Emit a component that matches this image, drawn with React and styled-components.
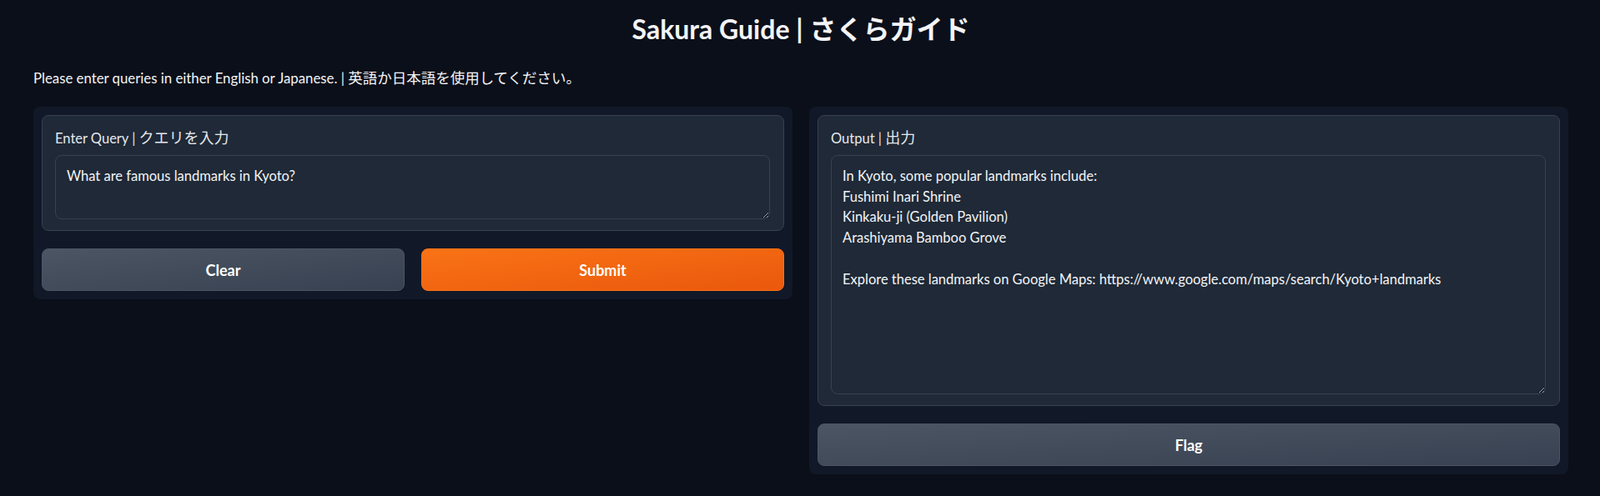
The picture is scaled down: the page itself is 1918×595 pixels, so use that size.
import React from "react"
import styled, { createGlobalStyle } from "styled-components"

const GlobalStyle = createGlobalStyle`
  body {
    margin: 0;
    background: #0b0f19;
    color: #f3f4f6;
    font-family: "Lato", "Noto Sans CJK JP", sans-serif;
  }
`

const Page = styled.div`
  padding: 16px 38px 26px 40px;
`

const Title = styled.h1`
  margin: 0;
  text-align: center;
  font-size: 32px;
  line-height: 38px;
  font-weight: 700;
  color: #f3f4f6;
`

// Japanese runs sit a little larger than the latin text around them
const Jp = styled.span`
  font-family: "Noto Sans CJK JP", sans-serif;
  font-size: ${p => p.$size}px;
`

const Description = styled.p`
  height: 24px;
  margin: 27px 0 23px;
  font-size: 16.8px;
  line-height: 24px;
  color: #f3f4f6;
`

const Columns = styled.div`
  display: grid;
  grid-template-columns: 1fr 1fr;
  gap: 20px;
  align-items: start;
`

const Panel = styled.div`
  display: flex;
  flex-direction: column;
  gap: 21px;
  padding: 10px;
  background: #111827;
  border-radius: 8px;
`

const Block = styled.div`
  padding: 15px 16px 13px 15px;
  background: #1f2937;
  border: 1px solid #374151;
  border-radius: 8px;
`

const Label = styled.label`
  display: block;
  height: 20px;
  margin-bottom: 12px;
  font-size: 16.5px;
  line-height: 20px;
  color: #e5e7eb;
`

const TextArea = styled.textarea`
  display: block;
  box-sizing: border-box;
  width: 100%;
  height: ${p => p.$height}px;
  margin: 0;
  padding: 12px 13px;
  background: #1f2937;
  border: 1px solid #374151;
  border-radius: 8px;
  color: #f3f4f6;
  font-family: "Lato", "Noto Sans CJK JP", sans-serif;
  font-size: 16.5px;
  line-height: 24.7px;
  outline: none;
`

const ButtonRow = styled.div`
  display: grid;
  grid-template-columns: 1fr 1fr;
  gap: 20px;
`

const Button = styled.button`
  height: 51px;
  border-radius: 8px;
  font-family: "Lato", "Noto Sans CJK JP", sans-serif;
  font-size: 18px;
  font-weight: 700;
  color: #ffffff;
  cursor: pointer;
  border: 1px solid ${p => (p.$primary ? "#f97316" : "#4b5563")};
  background: ${p =>
    p.$primary
      ? "linear-gradient(to bottom right, #f97316, #ea580c)"
      : "linear-gradient(to bottom right, #4b5563, #374151)"};
`

const output = `In Kyoto, some popular landmarks include:
Fushimi Inari Shrine
Kinkaku-ji (Golden Pavilion)
Arashiyama Bamboo Grove

Explore these landmarks on Google Maps: https://www.google.com/maps/search/Kyoto+landmarks`

export default function App() {
  return (
    <>
      <GlobalStyle />
      <Page>
        <Title>Sakura Guide | さくらガイド</Title>
        <Description>
          Please enter queries in either English or Japanese. | <Jp $size={17.5}>英語か日本語を使用してください。</Jp>
        </Description>
        <Columns>
          <Panel>
            <Block>
              <Label>
                Enter Query | <Jp $size={18}>クエリを入力</Jp>
              </Label>
              <TextArea $height={77} defaultValue="What are famous landmarks in Kyoto?" />
            </Block>
            <ButtonRow>
              <Button>Clear</Button>
              <Button $primary>Submit</Button>
            </ButtonRow>
          </Panel>
          <Panel>
            <Block>
              <Label>
                Output | <Jp $size={18}>出力</Jp>
              </Label>
              <TextArea $height={287} defaultValue={output} readOnly />
            </Block>
            <Button>Flag</Button>
          </Panel>
        </Columns>
      </Page>
    </>
  )
}
